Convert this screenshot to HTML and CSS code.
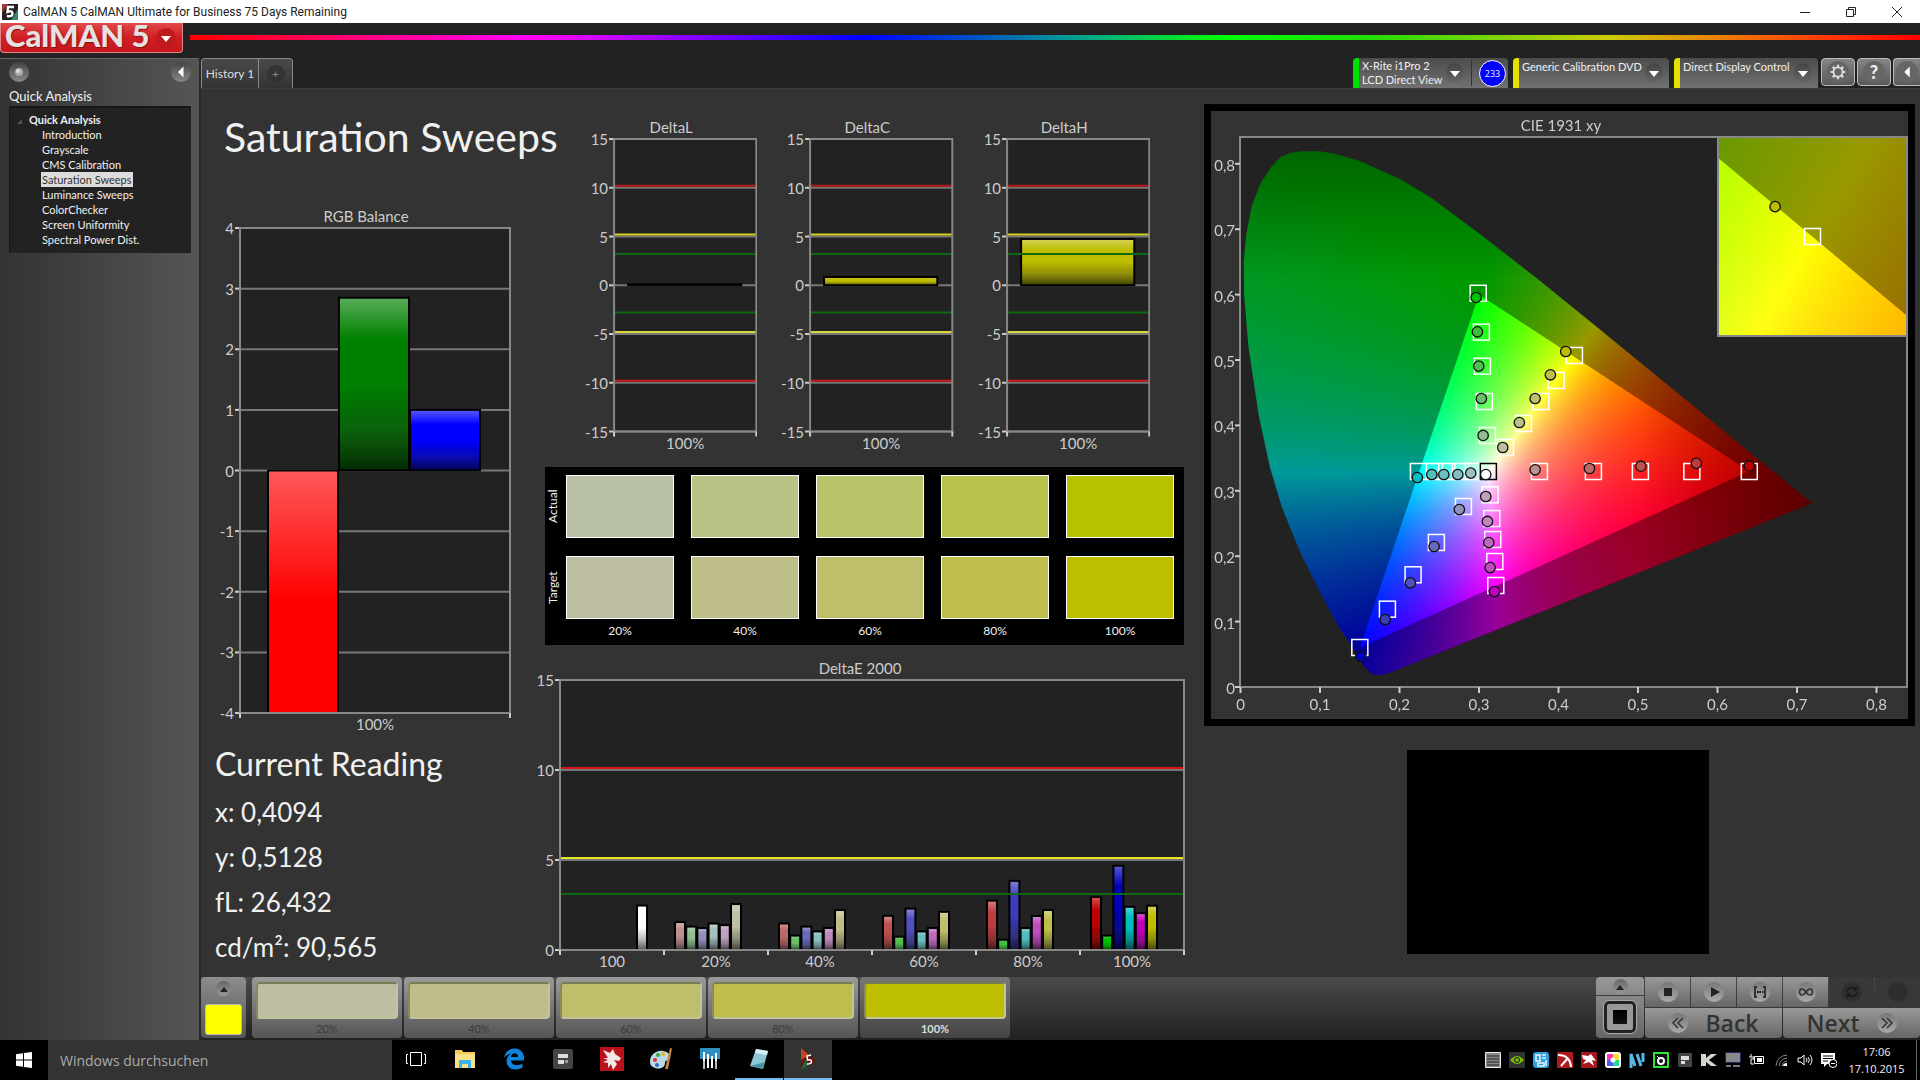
FILE: index.html
```html
<!DOCTYPE html>
<html lang="en">
<head>
    <meta charset="UTF-8">
    <meta name="viewport" content="width=device-width, initial-scale=1.0">
    <title>CalMAN 5</title>
    <link rel="stylesheet" href="styles.css">
</head>
<body>
    <!-- Window title -->
    <div class="titlebar">
        <svg class="app-icon" viewBox="0 0 16 16"><rect width="16" height="16" fill="#222"/><path d="M0 0h6L0 9z" fill="#a33"/><path d="M16 5v11H9z" fill="#386"/><path d="M12 3H6L5.500 8q5-2 5 1.500T5 12" fill="none" stroke="#fff" stroke-width="2.400"/></svg>
        <span class="titlebar-text">CalMAN 5 CalMAN Ultimate for Business 75 Days Remaining</span>
        <button class="win-button" aria-label="Minimize"><svg viewBox="0 0 12 12"><path d="M1 6.500h10"/></svg></button>
        <button class="win-button" aria-label="Restore"><svg viewBox="0 0 12 12"><path d="M1.500 3.500h7v7h-7zM3.500 3.500v-2h7v7h-2"/></svg></button>
        <button class="win-button" aria-label="Close"><svg viewBox="0 0 12 12"><path d="M1 1l10 10M11 1L1 11"/></svg></button>
    </div>

    <!-- Logo row -->
    <header class="header">
        <button class="logo"><span class="logo-text">CalMAN 5</span><span class="logo-arrow"><svg viewBox="0 0 10 6"><path d="M0 0h10L5 6z"/></svg></span></button>
        <div class="rainbow"></div>
    </header>

    <div class="workspace">
        <!-- Sidebar -->
        <aside class="sidebar">
            <div class="sidebar-top">
                <button class="round" aria-label="Options"><svg viewBox="0 0 20 20"><circle cx="10" cy="10" r="4" fill="#aaa"/><circle cx="9" cy="9" r="2" fill="#ddd"/></svg></button>
                <button class="round" aria-label="Collapse"><svg viewBox="0 0 20 20"><path d="M12.500 4.500v11L7 10z" fill="#fff"/></svg></button>
            </div>
            <div class="sidebar-title">Quick Analysis</div>
            <nav class="tree">
                <a class="tree-root" href="#"><svg class="twisty" viewBox="0 0 6 6"><path d="M6 0v6H0z"/></svg>Quick Analysis</a>
                <a href="#">Introduction</a>
                <a href="#">Grayscale</a>
                <a href="#">CMS Calibration</a>
                <a href="#" class="current">Saturation Sweeps</a>
                <a href="#">Luminance Sweeps</a>
                <a href="#">ColorChecker</a>
                <a href="#">Screen Uniformity</a>
                <a href="#">Spectral Power Dist.</a>
            </nav>
        </aside>

        <main class="main">
            <!-- Tabs and device controls -->
            <div class="tabs">
                <button class="tab">History 1</button>
                <button class="tab tab-add" aria-label="Add history"><span>+</span></button>
                <div class="devices">
                    <div class="device meter">
                        <button class="device-button">X-Rite i1Pro 2<br>LCD Direct View</button>
                        <span class="drop"><svg viewBox="0 0 10 6"><path d="M0 0h10L5 6z"/></svg></span>
                        <span class="split"></span>
                        <span class="count">233</span>
                    </div>
                    <label class="device source">
                        <select aria-label="Source"><option>Generic Calibration DVD</option></select>
                        <span class="drop"><svg viewBox="0 0 10 6"><path d="M0 0h10L5 6z"/></svg></span>
                    </label>
                    <label class="device display">
                        <select aria-label="Display"><option>Direct Display Control</option></select>
                        <span class="drop"><svg viewBox="0 0 10 6"><path d="M0 0h10L5 6z"/></svg></span>
                    </label>
                    <button class="tool" aria-label="Settings"><svg viewBox="0 0 24 24"><circle cx="12" cy="12" r="5" fill="none" stroke="#ddd" stroke-width="2"/><path d="M12 4v3M12 17v3M4 12h3M17 12h3M6.300 6.300l2.200 2.200M15.500 15.500l2.200 2.200M6.300 17.700l2.200-2.200M15.500 8.500l2.200-2.200" stroke="#ddd" stroke-width="2.400"/></svg></button>
                    <button class="tool" aria-label="Help"><span class="help">?</span></button>
                    <button class="tool tool-last" aria-label="Collapse panel"><svg viewBox="0 0 24 24"><path d="M15 6v12l-6-6z" fill="#fff"/></svg></button>
                </div>
            </div>

            <!-- Report page -->
            <div class="page">
                <section class="col-left">
                    <h1>Saturation Sweeps</h1>
                    <svg class="chart" id="rgbBalance" viewBox="0 0 329 530"></svg>
                    <div class="reading">
                        <h2>Current Reading</h2>
                        <p>x: 0,4094</p>
                        <p>y: 0,5128</p>
                        <p>fL: 26,432</p>
                        <p>cd/m²: 90,565</p>
                    </div>
                </section>

                <section class="col-center">
                    <div class="deltas">
                        <svg class="chart" id="deltaL" viewBox="0 0 196 335"></svg>
                        <svg class="chart" id="deltaC" viewBox="0 0 196 335"></svg>
                        <svg class="chart" id="deltaH" viewBox="0 0 196 335"></svg>
                    </div>
                    <div class="compare">
                        <span class="side">Actual</span>
                        <i class="patch actual-20"></i><i class="patch actual-40"></i><i class="patch actual-60"></i><i class="patch actual-80"></i><i class="patch actual-100"></i>
                        <span class="side">Target</span>
                        <i class="patch level-20"></i><i class="patch level-40"></i><i class="patch level-60"></i><i class="patch level-80"></i><i class="patch level-100"></i>
                        <span></span>
                        <span class="pct">20%</span><span class="pct">40%</span><span class="pct">60%</span><span class="pct">80%</span><span class="pct">100%</span>
                    </div>
                    <svg class="chart" id="deltaE" viewBox="0 0 670 320"></svg>
                </section>

                <section class="col-right">
                    <div class="cie">
                        <canvas id="cieFill" width="697" height="608"></canvas>
                        <svg class="chart" id="cieChart" viewBox="0 0 697 608"></svg>
                    </div>
                    <div class="preview"></div>
                </section>
            </div>

            <!-- Pattern bar -->
            <div class="bottom">
                <button class="current-color" aria-label="Current color"><span class="up"><svg viewBox="0 0 10 6"><path d="M0 6h10L5 0z"/></svg></span><i></i></button>
                <button class="level"><i class="level-20"></i>20%</button>
                <button class="level"><i class="level-40"></i>40%</button>
                <button class="level"><i class="level-60"></i>60%</button>
                <button class="level"><i class="level-80"></i>80%</button>
                <button class="level selected"><i class="level-100"></i>100%</button>

                <div class="controls">
                    <div class="pattern">
                        <button class="pattern-up" aria-label="Pattern menu"><span class="up"><svg viewBox="0 0 10 6"><path d="M0 6h10L5 0z"/></svg></span></button>
                        <button class="pattern-window" aria-label="Pattern window"><i></i></button>
                    </div>
                    <div class="transport">
                        <button aria-label="Stop"><svg viewBox="0 0 20 20"><path d="M6 6h8v8H6z"/></svg></button>
                        <button aria-label="Read"><svg viewBox="0 0 20 20"><path d="M7 5l9 5-9 5z"/></svg></button>
                        <button aria-label="Read series"><svg viewBox="0 0 20 20"><path d="M7 5H5v10h2M13 5h2v10h-2" fill="none" stroke="#333" stroke-width="2"/><path d="M7 9h2v2H7zM9.500 9h1.500v2H9.500zM12 9h1.500v2H12z"/></svg></button>
                        <button aria-label="Read continuous"><svg viewBox="0 0 20 20"><path d="M10 10C7 5.500 3.500 6.500 3.500 10s3.500 4.500 6.500 0 6.500-3.500 6.500 0-3.500 4.500-6.500 0z" fill="none" stroke="#333" stroke-width="1.500"/></svg></button>
                        <button class="off" aria-label="Refresh"><svg viewBox="0 0 20 20"><path d="M5 9.500c.500-4 6-5 8.500-2M15 10.500c-.500 4-6 5-8.500 2" fill="none" stroke="#1c1c1c" stroke-width="2"/><path d="M15.500 4v5h-5zM4.500 16v-5h5z" fill="#1c1c1c"/></svg></button>
                        <button class="off" aria-label="Unused"><svg viewBox="0 0 20 20"></svg></button>
                        <button class="step"><svg viewBox="0 0 20 20"><path d="M10 5l-5 5 5 5M15 5l-5 5 5 5" fill="none" stroke="#333" stroke-width="1.500"/></svg>Back</button>
                        <button class="step">Next<svg viewBox="0 0 20 20"><path d="M5 5l5 5-5 5M10 5l5 5-5 5" fill="none" stroke="#333" stroke-width="1.500"/></svg></button>
                    </div>
                </div>
            </div>
        </main>
    </div>

    <!-- Windows taskbar -->
    <footer class="taskbar">
        <button class="start" aria-label="Start"><svg viewBox="0 0 16 16"><path d="M0 2.300L7 1.200V7.600H0zM8 1L16 0v7.600H8zM0 8.500h7v6.300L0 13.800zM8 8.500h8V16l-8-1.100z" fill="#fff"/></svg></button>
        <input class="search" type="text" placeholder="Windows durchsuchen" aria-label="Windows durchsuchen">
        <div class="apps">
            <button aria-label="Task view"><svg viewBox="0 0 24 24"><path d="M6.500 5.500h11v13h-11zM4 7.500H2.500v9H4M20 7.500h1.500v9H20" fill="none" stroke="#fff"/></svg></button>
            <button aria-label="Explorer"><svg viewBox="0 0 24 24"><path d="M2 3h7l1 2h12v16H2z" fill="#f3c94f"/><path d="M2 7h20v14H2z" fill="#fbe08a"/><path d="M6 21v-8h12v8h-3v-4H9v4z" fill="#39b5ea"/></svg></button>
            <button aria-label="Edge"><svg viewBox="0 0 24 24"><path d="M2 11C3 4 8 1.500 12.500 1.500 19 1.500 22 6.500 22 11v2.500H9c.200 5 7 6 11.500 3v4.300C12 25 4.500 21 4.500 14c0-3.500 2-6 4.500-7.500-3 .500-5.500 2.500-7 4.500zm7-1h7c0-5-6.500-5-7 0z" fill="#1083dc"/></svg></button>
            <button aria-label="Recorder"><svg viewBox="0 0 24 24"><rect x="2" y="2" width="20" height="20" rx="2" fill="#444"/><path d="M7 7h10v4H7zM7 13h6v4H7z" fill="#ddd"/><path d="M14 13h3v3h-3z" fill="#999"/></svg></button>
            <button aria-label="Dragon Center"><svg viewBox="0 0 24 24"><path d="M0 0h24v24H0z" fill="#b9121b"/><path d="M3 3l7 3 3-4 2 5 6 4-2 3-5-1 3 4-4 6-2-6-3 4 0-5-5-1 5-2-5-2 5 0z" fill="#f3e9e9"/></svg></button>
            <button aria-label="Paint"><svg viewBox="0 0 24 24"><path d="M1 15C1 7 8 3 14 4c7 1 9 7 6 9-2 1-4 0-4 3 0 8-15 7-15-1z" fill="#b9d8ea"/><circle cx="6" cy="13" r="2" fill="#d33"/><circle cx="9" cy="8" r="2" fill="#3a3"/><circle cx="14" cy="7" r="2" fill="#e8b61c"/><circle cx="8" cy="18" r="2" fill="#36c"/><path d="M16 22L21 1l2 .500L19 22z" fill="#c8843c"/></svg></button>
            <button aria-label="Intel XTU"><svg viewBox="0 0 24 24"><path d="M2 1h20v11H2z" fill="#2c8fc0"/><path d="M5 5h2v9H5zM9 7h2v14H9zM13 9h2v12h-2zM17 6h2v8h-2z" fill="#fff"/><path d="M5 14h2v8H5zM17 14h2v8h-2z" fill="#bbb"/></svg></button>
            <button class="running" aria-label="Notes"><svg viewBox="0 0 24 24"><path d="M9 2l12 2-5 18-13-3z" fill="#8cc9d8"/><path d="M9 2l12 2-1 4-12-2z" fill="#d5eef4"/><path d="M3 19l13 3 2-7z" fill="#4c93a6"/></svg></button>
            <button class="running active" aria-label="CalMAN"><svg viewBox="0 0 24 24"><path d="M5 1l16 13L5 23z" fill="#661515"/><path d="M5 1l8 7-8 5z" fill="#c3461f"/><path d="M5 23l8-5-4-5z" fill="#236a38"/><path d="M15 8l-4 1 .500 4q4-1 4 1.500T11 17" fill="none" stroke="#fff" stroke-width="1.500"/></svg></button>
        </div>
        <div class="tray">
            <svg viewBox="0 0 16 16"><path d="M.500.500h15v15H.500z" fill="#888" stroke="#eee"/><path d="M2 4h12M2 7h12M2 10h12M2 13h12" stroke="#222"/></svg>
            <svg viewBox="0 0 16 16"><path d="M0 0h16v16H0z" fill="#2c3330"/><path d="M1 8q7-8 14 0-7 8-14 0z" fill="#76b900"/><circle cx="8" cy="8" r="2.500" fill="none" stroke="#213"/></svg>
            <svg viewBox="0 0 16 16"><rect width="16" height="16" rx="3" fill="#2c9fe0"/><path d="M3 3h4v6H3zM9 3h4M9 6h4M5 11h6v3H5zM13 8v6" fill="none" stroke="#e8f6ff" stroke-width="1.500"/></svg>
            <svg viewBox="0 0 16 16"><path d="M0 0h16v16H0z" fill="#b01820"/><path d="M1 3q12 0 13 12M4 14l7-8" fill="none" stroke="#fff" stroke-width="2"/></svg>
            <svg viewBox="0 0 16 16"><path d="M0 0h16v16H0z" fill="#a5161d"/><path d="M1 3l6 1 3-2 5 7-4-1 2 6-5-4-6 2 3-4-3-1z" fill="#fff"/></svg>
            <svg viewBox="0 0 16 16"><rect width="16" height="16" rx="3" fill="#fff"/><path d="M2 2h6v6H2z" fill="#f3a"/><path d="M8 2h6v6H8z" fill="#fd3"/><path d="M2 8h6v6H2z" fill="#55f"/><path d="M8 8h6v6H8z" fill="#2d8"/><circle cx="8" cy="8" r="2.500" fill="#eff"/></svg>
            <svg viewBox="0 0 16 16"><path d="M2 16V2l4 12M8 2l4 12M14 1v9" fill="none" stroke="#58b8e6" stroke-width="3"/></svg>
            <svg viewBox="0 0 16 16"><path d="M1 1h14v14H1z" fill="#111" stroke="#35e335" stroke-width="2"/><circle cx="8" cy="9" r="3" fill="none" stroke="#fff" stroke-width="2"/><path d="M4 4l2 2" stroke="#fff"/></svg>
            <svg viewBox="0 0 16 16"><rect x="1" y="1" width="14" height="14" rx="1" fill="#444"/><path d="M4 4h8v4H4zM4 9h4v3H4z" fill="#ddd"/></svg>
            <svg viewBox="0 0 16 16"><path d="M0 2h5v4l5-4h6L8 8l8 6h-6L5 10v4H0z" fill="#d5d5d0"/></svg>
            <svg viewBox="0 0 16 16"><path d="M.500.500h15v10H.500z" fill="#888" stroke="#22226a"/><path d="M1 13h5v2H1zM8 13h7v2H8z" fill="#778"/></svg>
            <svg viewBox="0 0 16 16"><path d="M5.500 4.500h9v7h-9zM2 2v3M0 5h5v2H2v5h3" fill="none" stroke="#fff"/><path d="M8 6h5v4H8z" fill="#fff"/></svg>
            <svg viewBox="0 0 16 16"><path d="M3 14Q4 4 14 3M6 14q1-7 8-8M9 14q0-4 5-5" fill="none" stroke="#888"/><path d="M10 14q0-3 4-3v3z" fill="#fff"/></svg>
            <svg viewBox="0 0 16 16"><path d="M1 6h3l3-3v10l-3-3H1zM9 6q2 2 0 4M11 5q3 3 0 6M13 3q4 5 0 10" fill="none" stroke="#fff"/></svg>
            <svg viewBox="0 0 16 16"><path d="M0 1h14v11H6l-3 3v-3H0z" fill="#fff"/><path d="M2 4h10M2 6.500h10M2 9h5" stroke="#000"/><circle cx="12" cy="11.500" r="4" fill="#000" stroke="#fff"/><path d="M10 11.500h4" stroke="#fff"/></svg>
        </div>
        <div class="clock">17:06<br>17.10.2015</div>
    </footer>

    <script src="charts.js"></script>
</body>
</html>
```
FILE: styles.css
```css
* {
    box-sizing: border-box;
}
body {
    margin: 0;
    min-height: 100vh;
    display: flex;
    flex-direction: column;
    background-color: #222;
    color: #f0f0f0;
    font-family: Lato, sans-serif;
    font-size: 14px;
    overflow-x: hidden;
}
button, select, input {
    font: inherit;
    color: inherit;
    border: none;
    border-radius: 0;
    padding: 0;
    margin: 0;
    background: none;
}
a {
    color: inherit;
    text-decoration: none;
}

/* Window title */
.titlebar {
    display: flex;
    align-items: center;
    height: 23px;
    padding-left: 2px;
    background-color: #fff;
    color: #222;
    font-family: Roboto, sans-serif;
    font-size: 12px;
}
.app-icon {
    width: 16px;
    height: 16px;
    margin-right: 5px;
}
.titlebar-text {
    flex: 1;
}
.win-button {
    width: 46px;
    height: 20px;
    line-height: 0;
}
.win-button svg {
    width: 12px;
    height: 12px;
    fill: none;
    stroke: #222;
}

/* Logo row */
.header {
    display: flex;
    height: 35px;
}
.logo {
    display: flex;
    align-items: center;
    width: 183px;
    height: 30px;
    padding-left: 4px;
    background: linear-gradient(#e04a4a, #d01f24 50%, #c5171c);
    border: 1px solid #d88;
    border-top: none;
    border-radius: 0 0 4px 4px;
    overflow: hidden;
}
.logo-text {
    flex: 1;
    font-size: 31px;
    font-weight: 900;
    line-height: 30px;
    padding-bottom: 6px;
    text-align: left;
    white-space: nowrap;
    color: #e6e2e2;
    text-shadow: 1px 1px 1px #811;
}
.logo-arrow {
    width: 20px;
    height: 20px;
    margin-right: 6px;
    border-radius: 50%;
    background-color: #c01a1e;
    line-height: 18px;
}
.logo-arrow svg, .drop svg {
    width: 10px;
    height: 6px;
    fill: #fff;
}
.rainbow {
    flex: 1;
    height: 5px;
    margin: 12px 0 0 7px;
    background: linear-gradient(90deg, #f00, #f0f 20%, #00f 39%, #0a8 52%, #0f0 60%, #2d0 68%, #cc0 82%, #f50 92%, #f00);
}

/* Sidebar */
.workspace {
    flex: 1;
    display: flex;
}
.sidebar {
    width: 201px;
    padding: 3px 8px 0 9px;
    background: linear-gradient(90deg, #333, #555);
    border-top: 1px solid #666;
    border-right: 2px solid #2a2a2a;
    border-radius: 0 4px 0 0;
}
.sidebar-top {
    display: flex;
    justify-content: space-between;
}
.round {
    width: 20px;
    height: 20px;
    border-radius: 50%;
    background: linear-gradient(#444, #888);
    line-height: 0;
}
.sidebar-title {
    margin-top: 4px;
    line-height: 20px;
    font-size: 13px;
}
.tree {
    height: 147px;
    padding: 4px 0 0 31px;
    background-color: #222;
    border-top: 2px solid #161616;
    border-left: 1px solid #161616;
    font-size: 11px;
}
.tree a {
    display: table;
    line-height: 15px;
    padding: 0 1px;
}
.tree .tree-root {
    margin-left: -25px;
    font-weight: bold;
}
.twisty {
    width: 5px;
    height: 5px;
    margin-right: 7px;
    fill: #555;
}
.tree .current {
    background-color: #ddd;
    color: #333;
}

/* Tabs and device controls */
.main {
    flex: 1;
    min-width: 0;
    display: flex;
    flex-direction: column;
}
.tabs {
    display: flex;
    height: 30px;
}
.tab {
    width: 58px;
    background: linear-gradient(#4a4a4a, #333);
    border: 1px solid #888;
    border-bottom: none;
    border-radius: 4px 0 0 0;
    font-size: 12px;
    color: #ddd;
    white-space: nowrap;
}
.tab-add {
    width: 34px;
    border-left: none;
    border-radius: 0 4px 0 0;
    color: #888;
}
.tab-add span {
    display: block;
    width: 18px;
    margin: 0 auto;
    border-radius: 50%;
    background-color: #333;
    line-height: 18px;
}
.devices {
    display: flex;
    margin-left: auto;
}
.device {
    display: flex;
    align-items: center;
    gap: 4px;
    margin-right: 5px;
    padding-right: 6px;
    background: linear-gradient(#4c4c4c, #717171);
    border-left: 6px solid #e5e000;
    border-radius: 4px 4px 0 0;
    font-size: 11px;
}
.device.meter {
    width: 155px;
    gap: 7px;
    padding-right: 2px;
    border-left-color: #0d0;
}
.device.source {
    width: 156px;
}
.device.display {
    width: 144px;
    margin-right: 3px;
}
.device-button {
    flex: 1;
    min-width: 0;
    padding-left: 3px;
    line-height: 14px;
    text-align: left;
    white-space: nowrap;
}
.device select {
    flex: 1;
    min-width: 0;
    height: 30px;
    padding: 0 0 14px 3px;
    appearance: none;
    white-space: nowrap;
}
.drop {
    width: 18px;
    height: 20px;
    border-radius: 50%;
    background: linear-gradient(#444, #666);
    line-height: 20px;
    text-align: center;
}
.device select + .drop {
    margin-left: -10px;
}
.split {
    width: 1px;
    height: 26px;
    background-color: #333;
}
.count {
    width: 27px;
    height: 27px;
    border: 1px solid #fff;
    border-radius: 50%;
    background-color: #00f;
    font-family: "Open Sans", sans-serif;
    font-size: 9px;
    line-height: 25px;
    text-align: center;
}
.tool {
    width: 34px;
    height: 28px;
    margin-right: 2px;
    background: linear-gradient(#858585, #5a5a5a);
    border: 1px solid #bbb;
    border-radius: 4px;
    line-height: 0;
}
.tool svg {
    width: 22px;
    height: 22px;
    border-radius: 50%;
    background-color: #666;
}
.tool-last {
    width: 27px;
    margin-right: 0;
    border-right: none;
    border-radius: 4px 0 0 4px;
}
.help {
    display: block;
    width: 22px;
    margin: 0 auto;
    border-radius: 50%;
    background-color: #666;
    font-size: 18px;
    font-weight: 900;
    line-height: 22px;
}

/* Report page */
.page {
    flex: 1;
    display: grid;
    grid-template-columns: minmax(0, 329fr) minmax(0, 670fr) minmax(0, 720fr);
    background-color: #333;
    border-top: 1px solid #3c3c3c;
}
.chart {
    display: block;
    width: 100%;
}
.chart text {
    fill: #ccc;
    font-size: 15px;
}
h1, h2, p {
    margin: 0;
    font-weight: normal;
    white-space: nowrap;
}
h1 {
    margin: 23px 0 44px 23px;
    font-size: 41px;
    line-height: 50px;
}
.reading {
    padding-left: 14px;
}
h2 {
    margin: 8px 0 6px;
    font-size: 32px;
    line-height: 40px;
}
p {
    font-size: 26px;
    line-height: 45px;
}
.deltas {
    display: grid;
    grid-template-columns: repeat(3, 1fr);
    padding: 29px 50px 0 31px;
}
.compare {
    display: grid;
    grid-template-columns: 4px repeat(5, 1fr);
    grid-template-rows: 81px 63px 25px;
    column-gap: 17px;
    margin: 13px 16px 10px 15px;
    padding: 8px 10px 1px 0;
    background-color: #000;
}
.side {
    writing-mode: vertical-rl;
    transform: rotate(180deg);
    width: 16px;
    height: 63px;
    line-height: 16px;
    text-align: center;
    font-size: 12px;
}
.patch {
    height: 63px;
    border: 1px solid #fff;
}
.pct {
    font-size: 12px;
    line-height: 24px;
    text-align: center;
}
.actual-20 { background-color: #b9c1a4; }
.actual-40 { background-color: #b9c386; }
.actual-60 { background-color: #b8c36a; }
.actual-80 { background-color: #b8c24a; }
.actual-100 { background-color: #b8c300; }
.level-20 { background-color: #bebea2; }
.level-40 { background-color: #bebe88; }
.level-60 { background-color: #bebe6b; }
.level-80 { background-color: #bebe4d; }
.level-100 { background-color: #bebe00; }

.col-right {
    padding: 15px 5px 0 4px;
}
.cie {
    display: grid;
    border: 7px solid #000;
}
.cie canvas, .cie svg {
    grid-area: 1 / 1;
    width: 100%;
}
.preview {
    width: 302px;
    height: 204px;
    margin: 24px 0 0 203px;
    background-color: #000;
}

/* Pattern bar */
.bottom {
    display: flex;
    gap: 2px;
    height: 63px;
    background: linear-gradient(#4a4a4a, #222);
    border-bottom: 2px solid #222;
}
.current-color {
    width: 45px;
    margin-right: 4px;
    background: linear-gradient(#8d8d8d, #555);
    border-radius: 4px;
}
.up {
    display: block;
    width: 15px;
    height: 15px;
    margin: 0 auto;
    border-radius: 50%;
    background: linear-gradient(#666, #999);
    line-height: 12px;
}
.up svg {
    width: 8px;
    height: 5px;
    fill: #222;
}
.current-color i {
    display: block;
    width: 37px;
    height: 31px;
    margin: 8px auto 0;
    border: 1px solid #bba;
    border-radius: 3px;
    background-color: #ff0;
}
.level {
    width: 150px;
    padding: 5px 4px 0;
    background: linear-gradient(#9a9a9a, #555);
    border-radius: 4px;
    font-size: 11px;
    line-height: 20px;
    color: #3a3a3a;
}
.level i {
    display: block;
    height: 37px;
    border: 2px solid;
    border-color: #7a7a50 #c4c49c #c4c49c #8a8a60;
    border-radius: 4px;
}
.level.selected {
    background: linear-gradient(#777, #444);
    color: #ddd;
    font-weight: bold;
}
.controls {
    display: flex;
    gap: 1px;
    margin-left: auto;
}
.pattern {
    display: flex;
    flex-direction: column;
    gap: 1px;
    width: 48px;
}
.pattern-up {
    height: 18px;
    background: linear-gradient(#999, #888);
    border-radius: 4px 4px 0 0;
}
.pattern-window {
    flex: 1;
    background: linear-gradient(#888, #666);
    border-radius: 0 0 4px 4px;
}
.pattern-window i {
    display: block;
    width: 32px;
    height: 32px;
    margin: 0 auto;
    border: 3px solid #222;
    border-radius: 5px;
    outline: 1px solid #aaa;
    background: linear-gradient(#000, #111) center / 14px 14px no-repeat #999;
}
.transport {
    display: grid;
    grid-template-columns: repeat(6, 45px);
    grid-template-rows: 30px 30px;
    gap: 1px;
}
.transport button {
    background: linear-gradient(#999, #666);
    line-height: 0;
}
.transport svg {
    width: 20px;
    height: 20px;
    border-radius: 50%;
    background: linear-gradient(#777, #aaa);
    fill: #222;
}
.transport .off {
    background: #383838;
}
.transport .off svg {
    background: #2e2e2e;
}
.transport .step {
    grid-column: span 3;
    display: flex;
    align-items: center;
    justify-content: center;
    gap: 17px;
    font-family: "Open Sans", sans-serif;
    font-size: 23px;
    font-weight: 600;
    color: #333;
    border-radius: 0 0 4px 4px;
}

/* Windows taskbar */
.taskbar {
    display: flex;
    height: 40px;
    background-color: #000;
    font-family: "Open Sans", sans-serif;
}
.taskbar button {
    line-height: 0;
}
.start {
    width: 48px;
}
.start svg {
    width: 16px;
    height: 16px;
}
.search {
    width: 344px;
    padding-left: 12px;
    background-color: #333;
    font-size: 14px;
}
.search::placeholder {
    color: #aaa;
    opacity: 1;
}
.apps {
    display: flex;
    gap: 1px;
}
.apps button {
    width: 48px;
    border-bottom: 2px solid transparent;
}
.apps svg {
    width: 24px;
    height: 24px;
}
.apps .running {
    border-bottom-color: #76b9ed;
}
.apps .active {
    background-color: #333;
}
.tray {
    display: flex;
    align-items: center;
    gap: 8px;
    margin-left: auto;
}
.tray svg {
    width: 16px;
    height: 16px;
}
.clock {
    width: 80px;
    margin: 0 3px 0 0;
    border-right: 1px solid #666;
    font-size: 11px;
    line-height: 17px;
    padding: 3px 0 0;
    text-align: center;
}
```
FILE: charts.js
```javascript
const NS = 'http://www.w3.org/2000/svg';

function add(parent, tag, attrs, text) {
    const node = document.createElementNS(NS, tag);
    for (const key in attrs) {
        node.setAttribute(key, attrs[key]);
    }
    if (text !== undefined) {
        node.textContent = text;
    }
    parent.appendChild(node);
    return node;
}

function addLine(parent, x1, y1, x2, y2, color, width) {
    add(parent, 'line', { x1, y1, x2, y2, stroke: color, 'stroke-width': width || 1 });
}

// Bar chart with a value axis on the left and category ticks below
function barChart(id, o) {
    const svg = document.getElementById(id);
    const { left, right, top, bottom, min, max } = o;
    const toY = v => bottom - (v - min) * (bottom - top) / (max - min);

    const defs = add(svg, 'defs', {});
    const shade = add(defs, 'linearGradient', { id: id + 'Shade', x1: 0, y1: 0, x2: 0, y2: 1 });
    add(shade, 'stop', { offset: 0, 'stop-color': '#fff', 'stop-opacity': 0.35 });
    add(shade, 'stop', { offset: 0.24, 'stop-color': '#fff', 'stop-opacity': 0 });
    add(shade, 'stop', { offset: 0.5, 'stop-color': '#000', 'stop-opacity': 0 });
    add(shade, 'stop', { offset: 0.75, 'stop-color': '#222', 'stop-opacity': 0.3 });
    add(shade, 'stop', { offset: 1, 'stop-color': '#000', 'stop-opacity': 0.68 });
    const clip = add(defs, 'clipPath', { id: id + 'Clip' });
    add(clip, 'rect', { x: left, y: top, width: right - left, height: bottom - top });

    add(svg, 'rect', { x: left, y: top, width: right - left, height: bottom - top, fill: '#222' });
    for (let v = min; v <= max; v += o.step) {
        const y = toY(v);
        addLine(svg, left, y, right, y, '#777', 2);
        addLine(svg, left - 5, y, left, y, '#ccc', 2);
        add(svg, 'text', { x: left - 6, y: y + 6, 'text-anchor': 'end' }, v);
    }

    const bars = add(svg, 'g', { 'clip-path': `url(#${id}Clip)` });
    o.bars.forEach(bar => {
        const y = Math.min(toY(0), toY(bar.value));
        const box = { x: bar.x, y, width: bar.width, height: Math.abs(toY(bar.value) - toY(0)) };
        add(bars, 'rect', { ...box, fill: bar.color });
        add(bars, 'rect', { ...box, fill: `url(#${id}Shade)`, stroke: '#000', 'stroke-width': 2 });
    });

    (o.limits || []).forEach(([value, color]) => {
        addLine(svg, left, toY(value) - 2, right, toY(value) - 2, color, 2);
    });

    add(svg, 'rect', { x: left, y: top, width: right - left, height: bottom - top, fill: 'none', stroke: '#888', 'stroke-width': 2 });
    const group = (right - left) / o.labels.length;
    o.labels.forEach((label, i) => {
        add(svg, 'text', { x: left + group * (i + 0.5), y: bottom + 17, 'text-anchor': 'middle' }, label);
    });
    for (let i = 0; i <= o.labels.length; i++) {
        addLine(svg, left + group * i, bottom, left + group * i, bottom + 5, '#ccc', 2);
    }
    add(svg, 'text', { x: o.titleX, y: top - 6, 'text-anchor': 'middle' }, o.title);
}

barChart('rgbBalance', {
    title: 'RGB Balance', titleX: 165,
    left: 39, right: 309, top: 22, bottom: 507,
    min: -4, max: 4, step: 1, labels: ['100%'],
    bars: [
        { x: 67, width: 70, value: -9, color: '#f00' },
        { x: 138, width: 70, value: 2.85, color: '#008000' },
        { x: 209, width: 70, value: 1, color: '#00f' }
    ]
});

const limits = [[10, '#b81818'], [5, '#d4d020'], [3, '#0f6812'], [-3, '#0f6812'], [-5, '#d8d83c'], [-10, '#c81a1a']];
[['L', 0.1], ['C', 0.85], ['H', 4.75]].forEach(([name, value]) => {
    barChart('delta' + name, {
        title: 'Delta' + name, titleX: 110,
        left: 53, right: 195, top: 21, bottom: 313,
        min: -15, max: 15, step: 5, labels: ['100%'],
        bars: [{ x: 67, width: 113, value, color: value < 0.5 ? '#111' : '#bebe00' }],
        limits
    });
});

// Sweep colors: full channel at 190, the others fall with saturation
const low = [145, 105, 80, 60, 0];
const lowMixed = [162, 136, 107, 77, 0];
const hues = {
    R: i => `rgb(190,${low[i]},${low[i]})`,
    G: i => `rgb(${low[i]},190,${low[i]})`,
    B: i => `rgb(${low[i]},${low[i]},190)`,
    C: i => `rgb(${lowMixed[i]},190,190)`,
    M: i => `rgb(190,${lowMixed[i]},190)`,
    Y: i => `rgb(190,190,${lowMixed[i]})`
};

const deltaE = [
    [1.55, 1.3, 1.22, 1.47, 1.38, 2.55],
    [1.47, 0.8, 1.3, 1.03, 1.22, 2.22],
    [1.9, 0.74, 2.3, 1.03, 1.22, 2.12],
    [2.74, 0.57, 3.84, 1.22, 1.89, 2.22],
    [2.95, 0.8, 4.68, 2.4, 2.05, 2.46]
];
const deltaEBars = [{ x: 107, width: 10, value: 2.47, color: '#fff' }];
deltaE.forEach((row, i) => {
    row.forEach((value, k) => {
        deltaEBars.push({ x: 30 + 104 * (i + 1) + 11 + k * 11.2, width: 10, value, color: hues['RGBCMY'[k]](i) });
    });
});
barChart('deltaE', {
    title: 'DeltaE 2000', titleX: 330,
    left: 30, right: 654, top: 25, bottom: 295,
    min: 0, max: 15, step: 5, labels: ['100', '20%', '40%', '60%', '80%', '100%'],
    bars: deltaEBars,
    limits: [[10, '#d41818'], [5, '#e4e420'], [3, '#0f6812']]
});

// CIE 1931 diagram
const plot = { left: 29, top: 26, right: 696, bottom: 576, sx: 795, sy: 654 };
const inset = { left: 507, top: 26, width: 189, height: 199, x: 0.4193, y: 0.5053, range: 0.05 };
const locus = [
    [0.163, 0.022], [0.154, 0.034], [0.146, 0.05], [0.138, 0.067], [0.1253, 0.088], [0.1, 0.145], [0.075, 0.206],
    [0.052, 0.275], [0.037, 0.336], [0.023, 0.415], [0.01, 0.52], [0.0045, 0.6], [0.004, 0.65], [0.007, 0.69],
    [0.014, 0.735], [0.025, 0.77], [0.039, 0.796], [0.05, 0.81], [0.061, 0.816], [0.075, 0.819], [0.1, 0.819],
    [0.12, 0.815], [0.151, 0.804], [0.2, 0.777], [0.24, 0.748], [0.3016, 0.6923], [0.3731, 0.6245],
    [0.4441, 0.5547], [0.5125, 0.4866], [0.5752, 0.4242], [0.627, 0.3725], [0.719, 0.281], [0.186, 0.021],
    [0.177, 0.0185], [0.169, 0.0185]
];
const gamut = [[0.3, 0.6], [0.64, 0.33], [0.15, 0.06]];

function xyToRgb(x, y, bright) {
    const X = x / y;
    const Z = (1 - x - y) / y;
    const rgb = [
        3.2406 * X - 1.5372 - 0.4986 * Z,
        -0.9689 * X + 1.8758 + 0.0415 * Z,
        0.0557 * X - 0.204 + 1.057 * Z
    ].map(c => Math.max(0, c));
    const peak = Math.max(...rgb);
    // fade towards the far red and far green ends
    const fade = 1 - Math.max(0, x - 0.5) * 1.9 - Math.max(0, y - 0.62) * 1.7;
    return rgb.map(c => 255 * c / peak * bright * fade);
}

function fillDiagram(ctx, box, toXy, toPixel) {
    [[locus, 0.6], [gamut, 1]].forEach(([outline, bright]) => {
        const layer = document.createElement('canvas');
        layer.width = box.width;
        layer.height = box.height;
        const layerCtx = layer.getContext('2d');
        const image = layerCtx.createImageData(box.width, box.height);
        for (let j = 0; j < box.height; j++) {
            for (let i = 0; i < box.width; i++) {
                const [x, y] = toXy(i, j);
                const rgb = xyToRgb(x, Math.max(y, 0.001), bright);
                const at = (j * box.width + i) * 4;
                image.data[at] = rgb[0];
                image.data[at + 1] = rgb[1];
                image.data[at + 2] = rgb[2];
                image.data[at + 3] = 255;
            }
        }
        layerCtx.putImageData(image, 0, 0);

        ctx.save();
        ctx.beginPath();
        ctx.rect(box.left, box.top, box.width, box.height);
        ctx.clip();
        ctx.beginPath();
        outline.forEach(point => ctx.lineTo(...toPixel(...point)));
        ctx.closePath();
        ctx.clip();
        ctx.drawImage(layer, box.left, box.top);
        ctx.restore();
    });
}

const px = x => plot.left + 0.5 + x * plot.sx;
const py = y => plot.bottom - y * plot.sy;
const insetX = x => inset.left + inset.width / 2 + (x - inset.x) * inset.width / inset.range;
const insetY = y => inset.top + inset.height / 2 - (y - inset.y) * inset.height / inset.range;

function drawCieFill() {
    const ctx = document.getElementById('cieFill').getContext('2d');
    const box = { left: plot.left, top: plot.top, width: plot.right - plot.left, height: plot.bottom - plot.top };
    ctx.fillStyle = '#222';
    ctx.fillRect(box.left, box.top, box.width, box.height);
    fillDiagram(ctx, box, (i, j) => [i / plot.sx, (box.height - j) / plot.sy], (x, y) => [px(x), py(y)]);
    fillDiagram(ctx, inset,
        (i, j) => [inset.x + (i / inset.width - 0.5) * inset.range, inset.y - (j / inset.height - 0.5) * inset.range],
        (x, y) => [insetX(x), insetY(y)]);
}

// target x, target y, measured x, measured y for 20% to 100%
const sweeps = {
    C: [[0.293, 0.3295, 0.2896, 0.327], [0.2766, 0.3295, 0.2733, 0.3249], [0.2595, 0.3295, 0.2557, 0.3249], [0.2439, 0.3295, 0.2406, 0.3249], [0.2238, 0.3295, 0.2225, 0.3203]],
    G: [[0.3106, 0.3846, 0.3052, 0.3846], [0.3068, 0.4365, 0.303, 0.4411], [0.3043, 0.4906, 0.2997, 0.4906], [0.303, 0.5426, 0.298, 0.5431], [0.299, 0.602, 0.2964, 0.5956]],
    Y: [[0.3332, 0.3662, 0.3299, 0.3662], [0.3559, 0.4029, 0.3508, 0.4044], [0.3777, 0.4365, 0.3706, 0.4411], [0.397, 0.4687, 0.3898, 0.4774], [0.42, 0.5069, 0.4091, 0.513]],
    R: [[0.376, 0.3295, 0.3706, 0.3321], [0.4439, 0.3295, 0.4389, 0.3341], [0.503, 0.3295, 0.5036, 0.3376], [0.5677, 0.3295, 0.5734, 0.342], [0.64, 0.3295, 0.64, 0.338]],
    M: [[0.314, 0.2939, 0.3085, 0.2913], [0.3161, 0.2576, 0.3106, 0.2531], [0.3173, 0.2255, 0.3123, 0.2209], [0.3199, 0.1919, 0.314, 0.1827], [0.3211, 0.1552, 0.3194, 0.146]],
    B: [[0.2804, 0.276, 0.2753, 0.2714], [0.2464, 0.221, 0.2435, 0.2148], [0.2171, 0.1716, 0.2137, 0.1593], [0.1848, 0.119, 0.1819, 0.1032], [0.1501, 0.0604, 0.1513, 0.0471]]
};

function addTarget(svg, x, y, color) {
    add(svg, 'rect', { x: x - 8, y: y - 8, width: 16, height: 16, fill: 'none', stroke: color, 'stroke-width': 1.5 });
}

function addReading(svg, x, y, color) {
    add(svg, 'circle', { cx: x, cy: y, r: 5.2, fill: color, stroke: '#111', 'stroke-width': 1.3 });
}

function drawCieChart() {
    const svg = document.getElementById('cieChart');
    add(svg, 'rect', { x: plot.left, y: plot.top, width: plot.right - plot.left, height: plot.bottom - plot.top, fill: 'none', stroke: '#888', 'stroke-width': 2 });
    for (let i = 0; i <= 8; i++) {
        const label = i ? '0,' + i : '0';
        addLine(svg, px(i / 10), plot.bottom, px(i / 10), plot.bottom + 6, '#ccc', 2);
        addLine(svg, plot.left - 5, py(i / 10), plot.left, py(i / 10), '#ccc', 2);
        add(svg, 'text', { x: px(i / 10), y: plot.bottom + 23, 'text-anchor': 'middle' }, label);
        add(svg, 'text', { x: plot.left - 5, y: py(i / 10) + 7, 'text-anchor': 'end' }, label);
    }
    add(svg, 'text', { x: 350, y: 20, 'text-anchor': 'middle' }, 'CIE 1931 xy');

    Object.values(sweeps).forEach(points => points.forEach(p => addTarget(svg, px(p[0]), py(p[1]), '#fff')));
    addTarget(svg, px(0.3118), py(0.3295), '#000');
    for (const hue in sweeps) {
        sweeps[hue].forEach((p, i) => addReading(svg, px(p[2]), py(p[3]), hues[hue](i)));
    }
    addReading(svg, px(0.3085), py(0.3249), '#fff');

    add(svg, 'rect', { x: inset.left, y: inset.top, width: inset.width, height: inset.height, fill: 'none', stroke: '#888', 'stroke-width': 2 });
    addTarget(svg, insetX(0.4193), insetY(0.5053), '#fff');
    addReading(svg, insetX(0.4094), insetY(0.5128), '#bebe00');
}

drawCieFill();
drawCieChart();
```
